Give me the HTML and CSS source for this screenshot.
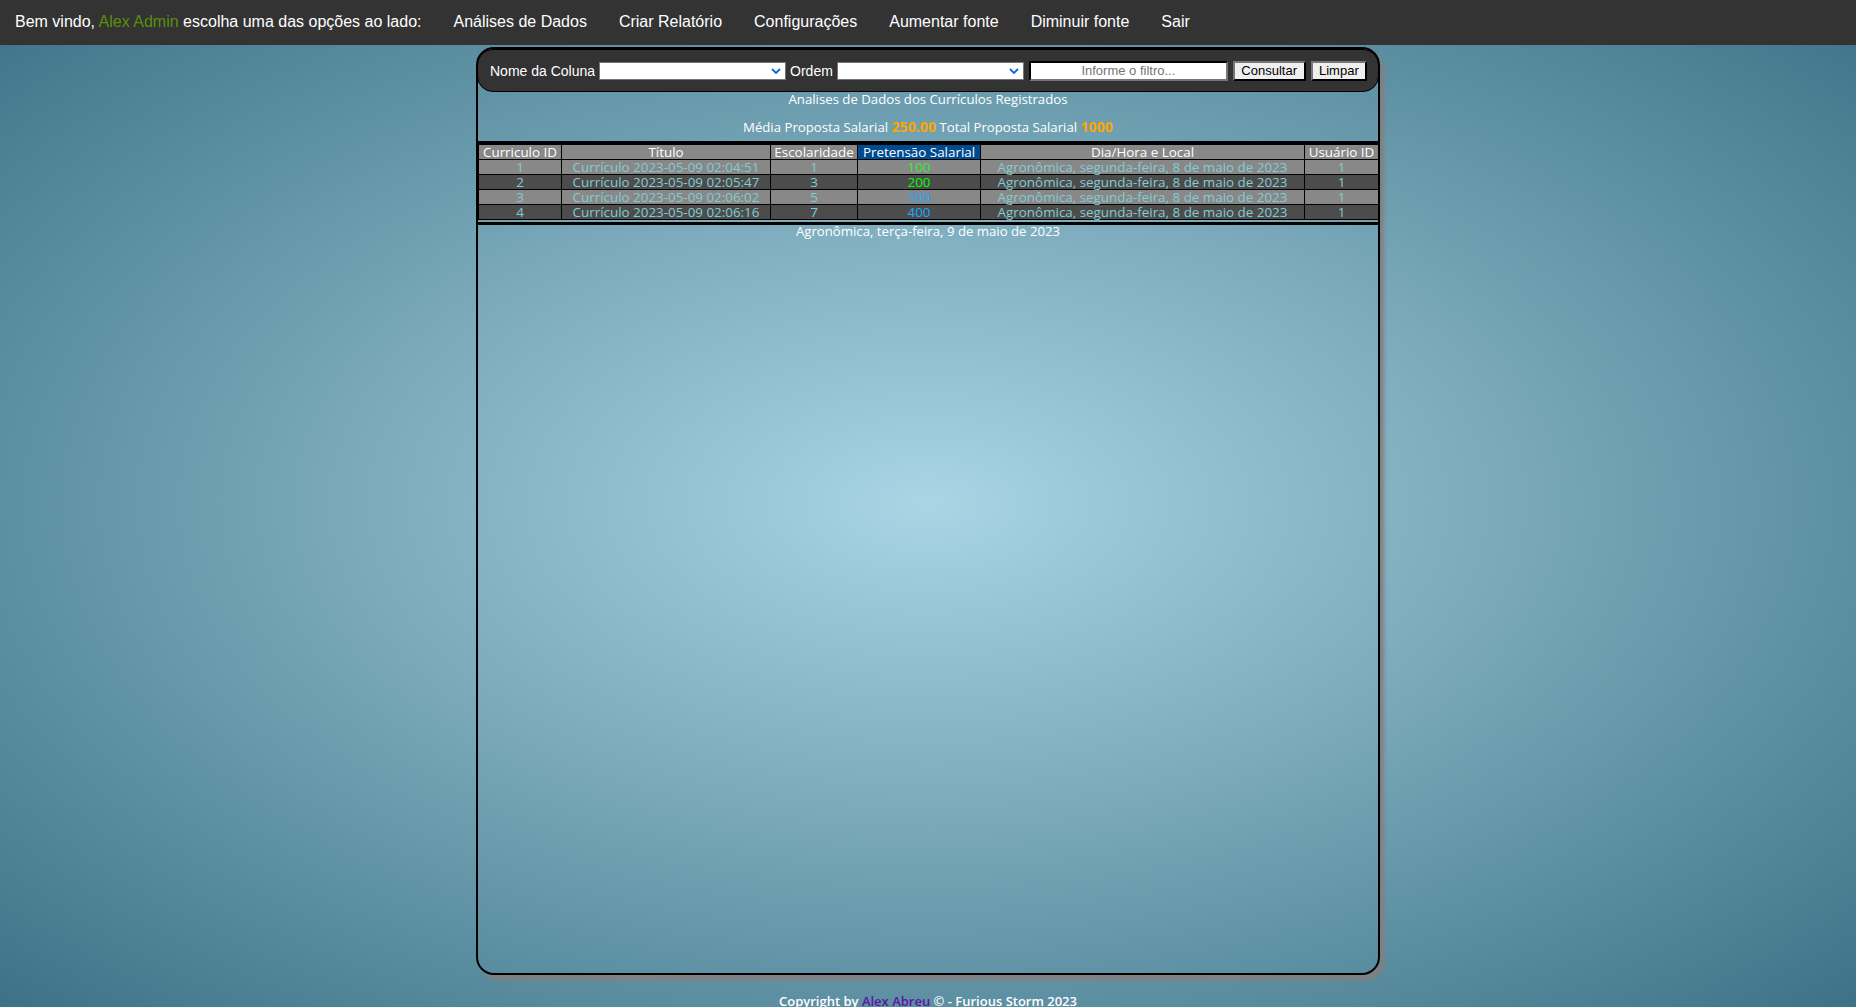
FILE: index.html
```html
<!DOCTYPE html>
<html lang="pt-BR">
<head>
  <meta charset="UTF-8" />
  <title>Analises de Dados</title>
  <link rel="stylesheet" href="styles.css">
</head>
<body>

  <nav class="topnav">
    <span class="welcome">Bem vindo, <span class="user-name">Alex Admin</span> escolha uma das opções ao lado:</span>
    <a href="#">Análises de Dados</a>
    <a href="#">Criar Relatório</a>
    <a href="#">Configurações</a>
    <a href="#">Aumentar fonte</a>
    <a href="#">Diminuir fonte</a>
    <a href="#">Sair</a>
  </nav>

  <main class="panel">
    <form class="filters">
      <label>Nome da Coluna</label>
      <span class="select-wrap select-wide">
        <select></select>
        <svg class="chevron" width="10" height="6" viewBox="0 0 10 6"><path d="M1 1l4 4 4-4" fill="none" stroke="#0a64f0" stroke-width="1.8"/></svg>
      </span>
      <label>Ordem</label>
      <span class="select-wrap select-wide">
        <select></select>
        <svg class="chevron" width="10" height="6" viewBox="0 0 10 6"><path d="M1 1l4 4 4-4" fill="none" stroke="#0a64f0" stroke-width="1.8"/></svg>
      </span>
      <input type="text" class="filter-input" placeholder="Informe o filtro..." />
      <button type="button" class="btn">Consultar</button>
      <button type="button" class="btn">Limpar</button>
    </form>

    <p class="title">Analises de Dados dos Currículos Registrados</p>
    <p class="summary">Média Proposta Salarial <b>250.00</b> Total Proposta Salarial <b>1000</b></p>

    <hr class="rule" />
    <table class="report">
      <colgroup>
        <col class="col-id"><col class="col-title"><col class="col-school"><col class="col-salary"><col class="col-place"><col class="col-user">
      </colgroup>
      <thead>
        <tr>
          <th>Curriculo ID</th>
          <th>Título</th>
          <th>Escolaridade</th>
          <th class="sorted">Pretensão Salarial</th>
          <th>Dia/Hora e Local</th>
          <th>Usuário ID</th>
        </tr>
      </thead>
      <tbody>
        <tr>
          <td>1</td><td>Currículo 2023-05-09 02:04:51</td><td>1</td><td class="val-low">100</td>
          <td>Agronômica, segunda-feira, 8 de maio de 2023</td><td>1</td>
        </tr>
        <tr>
          <td>2</td><td>Currículo 2023-05-09 02:05:47</td><td>3</td><td class="val-mid">200</td>
          <td>Agronômica, segunda-feira, 8 de maio de 2023</td><td>1</td>
        </tr>
        <tr>
          <td>3</td><td>Currículo 2023-05-09 02:06:02</td><td>5</td><td class="val-high">300</td>
          <td>Agronômica, segunda-feira, 8 de maio de 2023</td><td>1</td>
        </tr>
        <tr>
          <td>4</td><td>Currículo 2023-05-09 02:06:16</td><td>7</td><td class="val-high">400</td>
          <td>Agronômica, segunda-feira, 8 de maio de 2023</td><td>1</td>
        </tr>
      </tbody>
    </table>
    <hr class="rule rule-bottom" />
    <p class="date">Agronômica, terça-feira, 9 de maio de 2023</p>
  </main>

  <footer class="copyright">Copyright by <a href="#">Alex Abreu</a> © - Furious Storm 2023</footer>

</body>
</html>
```

FILE: styles.css
```css
* {
  box-sizing: border-box;
}

html, body {
  height: 1007px;
  overflow: hidden;
}

body {
  margin: 0;
  font-family: "Open Sans", "Noto Sans", sans-serif;
  font-size: 13.2px;
  color: #fff;
  background: radial-gradient(ellipse farthest-corner at 50% 50%, #a9d5e5 0%, #3d7286 100%);
}

.topnav {
  display: flex;
  align-items: center;
  height: 45px;
  padding: 0 0 2px 15px;
  background: #333;
  font-family: "Liberation Sans", Arial, sans-serif;
  font-size: 16px;
}

.topnav a {
  color: #fff;
  text-decoration: none;
  margin-left: 32px;
}

.user-name {
  color: #5a8f0c;
}

.panel {
  width: 904px;
  height: 928px;
  margin: 2px auto 0;
  border: 2px solid #000;
  border-radius: 18px;
  box-shadow: 4px 5px 4px #808080;
}

.filters {
  display: flex;
  align-items: center;
  height: 43px;
  margin: 0 -1px;
  padding: 0 10px 0 12px;
  background: #333;
  border: 1px solid #000;
  border-radius: 16px;
  font-family: "Liberation Sans", Arial, sans-serif;
  font-size: 14px;
}

.filters label {
  white-space: nowrap;
}

.select-wrap {
  position: relative;
  display: block;
  margin: 0 4px;
}

.select-wide {
  width: 187px;
}

.select-wrap select {
  display: block;
  width: 100%;
  height: 18px;
  background: #fff;
  border: 1px solid #767676;
  border-radius: 0;
  appearance: none;
}

.chevron {
  position: absolute;
  top: 6px;
  right: 5px;
}

.filter-input {
  width: 199px;
  height: 20px;
  margin-left: 1px;
  padding: 0;
  background: #fff;
  border-width: 2px;
  border-style: inset;
  border-color: #333 #767676 #767676 #333;
  text-align: center;
  font-family: "Liberation Sans", Arial, sans-serif;
  font-size: 13px;
}

.filter-input::placeholder {
  color: #757575;
}

.btn {
  height: 20px;
  margin-left: 5px;
  padding: 0 6.5px;
  background: #efefef;
  color: #000;
  border: 2px outset #222;
  border-radius: 0;
  font-family: "Liberation Sans", Arial, sans-serif;
  font-size: 13px;
}

.title, .summary, .date, .copyright {
  margin: 0;
  text-align: center;
}

.title {
  line-height: 14px;
}

.summary {
  margin-top: 12px;
  line-height: 18px;
}

.summary b {
  color: #ffa500;
  font-size: 14.2px;
}

.rule {
  height: 3px;
  margin: 5px 0 0;
  border: none;
  background: #000;
}

.rule-bottom {
  margin-top: 2px;
}

.report {
  width: 900px;
  table-layout: fixed;
  border-collapse: collapse;
  font-size: 13.4px;
  line-height: 14px;
  border: 1px solid #000;
}

.col-id { width: 83px; }
.col-title { width: 209px; }
.col-school { width: 87px; }
.col-salary { width: 123px; }
.col-place { width: 324px; }
.col-user { width: 74px; }

.report th, .report td {
  padding: 0;
  border: 1px solid #000;
  text-align: center;
  font-weight: normal;
  white-space: nowrap;
}

.report th {
  background: #888;
  color: #fff;
}

.report th.sorted {
  background: #004a8f;
}

.report td {
  color: #83cdd1;
}

.report tbody tr:nth-child(odd) {
  background: #888;
}

.report tbody tr:nth-child(even) {
  background: #4c4c4c;
}

.report td.val-low { color: #33ee33; }
.report td.val-mid { color: #00ff00; }
.report td.val-high { color: #1aa7ff; }

.date {
  line-height: 12px;
}

.copyright {
  margin-top: 17px;
  font-size: 13px;
  font-weight: 600;
  line-height: 18px;
}

.copyright a {
  color: #5a14a8;
}
```
